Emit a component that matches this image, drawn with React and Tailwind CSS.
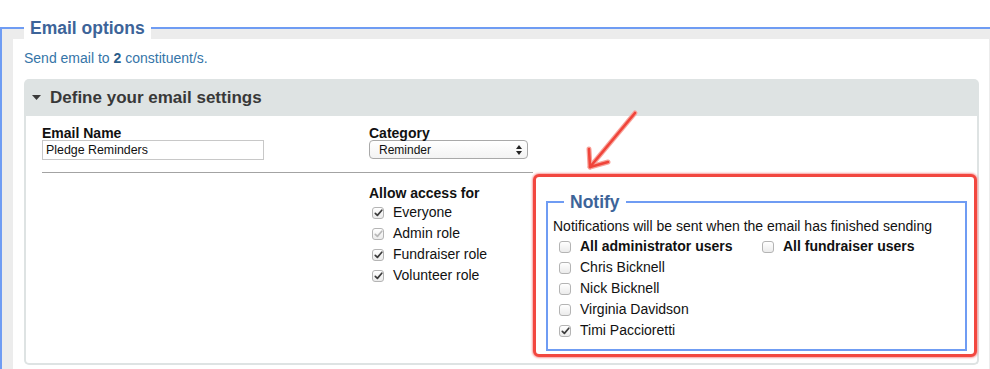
import React from 'react';

const FONT = "font-['Liberation_Sans',Arial,Helvetica,sans-serif]";

function Check({ checked, disabled }) {
  return (
    <span className="w-[12px] h-[12px] shrink-0 rounded-[3px] border border-[#b4b4b4] bg-gradient-to-b from-white to-[#ebebeb] flex items-center justify-center">
      {checked && (
        <svg width="9" height="8" viewBox="0 0 9 8">
          <path
            d="M1.3 4.4 L3.4 6.4 L7.8 1.2"
            fill="none"
            stroke={disabled ? '#b8b8b8' : '#3c3c3c'}
            strokeWidth="1.7"
            strokeLinecap="round"
            strokeLinejoin="round"
          />
        </svg>
      )}
    </span>
  );
}

function CheckRow({ label, checked, disabled, bold, className = '' }) {
  return (
    <div className={`h-[21px] flex items-center ${className}`}>
      <Check checked={checked} disabled={disabled} />
      <span className={`ml-[9px] text-[14px] text-[#111] whitespace-nowrap ${bold ? 'font-bold' : ''}`}>{label}</span>
    </div>
  );
}

function Arrow() {
  // red annotation arrow pointing at the Notify box
  return (
    <svg className="absolute left-[575px] top-[100px] pointer-events-none" width="75" height="80" viewBox="575 100 75 80">
      <g fill="none" strokeLinecap="round" strokeLinejoin="round">
        <g stroke="#f8a49c" strokeWidth="5">
          <path d="M635 113 L590 167" />
          <path d="M589 149 L590 167 L608 162" />
        </g>
        <g stroke="#f0443a" strokeWidth="2.6">
          <path d="M635 113 L590 167" />
          <path d="M589 149 L590 167 L608 162" />
        </g>
      </g>
    </svg>
  );
}

export default function App() {
  return (
    <div className={`relative w-[990px] h-[369px] overflow-hidden bg-white pt-[17px] ${FONT}`}>
      <fieldset className="border-l-2 border-t-2 border-[#6f9cf3] bg-[#ececec] pl-[11px] pr-[5px] h-[400px]">
        <legend className="ml-[11px] px-[6px] bg-white text-[17.5px] leading-[22px] font-bold text-[#3d6499]">
          Email options
        </legend>

        <div className="bg-white h-full pt-[11px] pl-[11px] pr-[10px]">
          <div className="text-[14px] leading-[16px] text-[#3575a8]">
            Send email to <b className="text-[#2b5d8a]">2</b> constituent/s.
          </div>

          {/* settings panel */}
          <div className="mt-[13px]">
            <div className="h-[37px] bg-[#dee3e3] rounded-t-[5px] flex items-center pl-[8px]">
              <svg width="9" height="5" viewBox="0 0 9 5" className="mr-[9px]">
                <path d="M0 0 H9 L4.5 5 Z" fill="#3a3a3a" />
              </svg>
              <span className="text-[17px] font-bold text-[#383838]">Define your email settings</span>
            </div>

            <div className="h-[249px] border-2 border-t-0 border-[#dee3e3] rounded-b-[5px] bg-white pl-[16px] pt-[9px]">
              <div className="flex">
                <div className="w-[327px]">
                  <div className="text-[14px] leading-[16px] font-bold text-[#111]">Email Name</div>
                  <div className="-mt-px w-[222px] h-[20px] border border-[#c8c8c8] text-[12.4px] leading-[18px] pl-[3px] text-[#111]">
                    Pledge Reminders
                  </div>
                </div>
                <div>
                  <div className="text-[14px] leading-[16px] font-bold text-[#111]">Category</div>
                  <div className="-mt-px w-[159px] h-[19px] rounded-[4px] border border-[#a9a9a9] bg-gradient-to-b from-white to-[#f3f3f3] flex items-center justify-between pl-[9px] pr-[5px] text-[12px] text-[#111]">
                    <span>Reminder</span>
                    <svg width="6" height="10" viewBox="0 0 6 10">
                      <path d="M0 4 L3 0 L6 4 Z M0 6 L3 10 L6 6 Z" fill="#222" />
                    </svg>
                  </div>
                </div>
              </div>

              <div className="mt-[12px] w-[491px] h-px bg-[#a3a3a3]" />

              <div className="flex items-start">
                <div className="w-[327px]" />
                <div className="w-[164px] pt-[12px]">
                  <div className="text-[14px] leading-[16px] font-bold text-[#111]">Allow access for</div>
                  <div className="pl-[3px] mt-[1px]">
                    <CheckRow label="Everyone" checked />
                    <CheckRow label="Admin role" checked disabled />
                    <CheckRow label="Fundraiser role" checked />
                    <CheckRow label="Volunteer role" checked />
                  </div>
                </div>

                {/* highlighted notify block */}
                <div className="mt-[1px] w-[444px] h-[183px] shrink-0 border-[3px] border-[#f2473f] rounded-[6px] shadow-[0_0_2px_1px_#f8a0a0] bg-white pl-[10px] pr-[7px] pt-[14px]">
                  <fieldset className="border-2 border-[#6f9cf3] pl-[5px] pb-[8px]">
                    <legend className="ml-[11px] px-[6px] text-[17.5px] leading-[22px] font-bold text-[#3d6499]">Notify</legend>
                    <div className="pt-[5px] text-[14px] leading-[16px] text-[#111] whitespace-nowrap">
                      Notifications will be sent when the email has finished sending
                    </div>
                    <div className="pl-[6px] mt-[2px]">
                      <div className="flex">
                        <CheckRow label="All administrator users" bold className="w-[203px]" />
                        <CheckRow label="All fundraiser users" bold />
                      </div>
                      <CheckRow label="Chris Bicknell" />
                      <CheckRow label="Nick Bicknell" />
                      <CheckRow label="Virginia Davidson" />
                      <CheckRow label="Timi Paccioretti" checked />
                    </div>
                  </fieldset>
                </div>
              </div>
            </div>
          </div>
        </div>
      </fieldset>
      <Arrow />
    </div>
  );
}
